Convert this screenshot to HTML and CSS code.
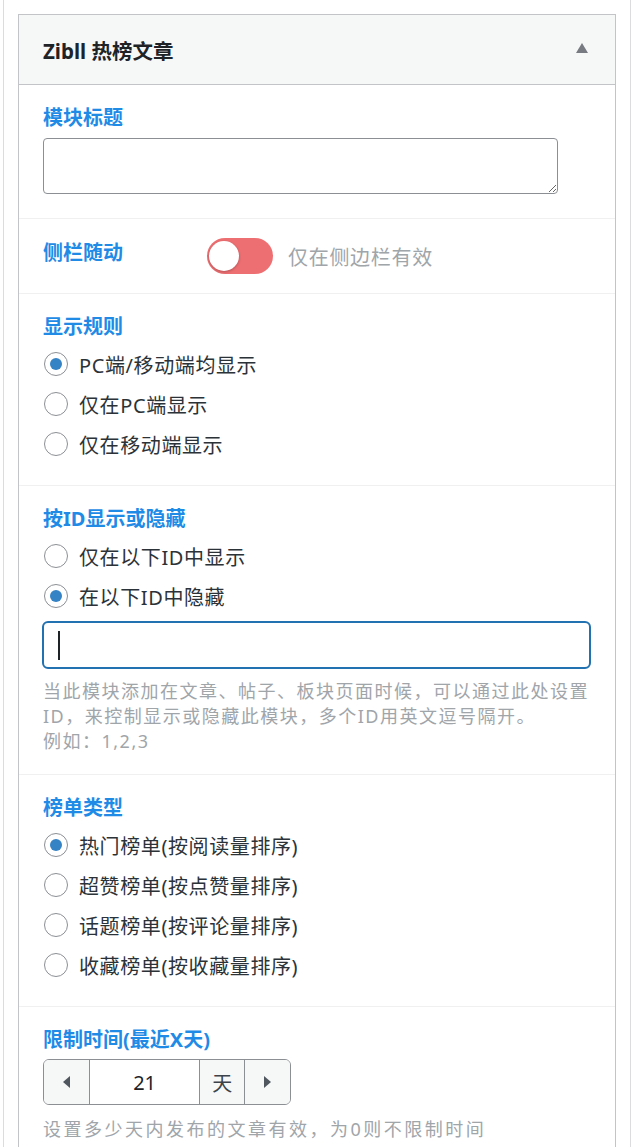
FILE: index.html
```html
<!DOCTYPE html>
<html lang="zh-CN">
<head>
  <meta charset="UTF-8">
  <meta name="viewport" content="width=device-width, initial-scale=1.0">
  <title>Zibll 热榜文章</title>
  <link rel="stylesheet" href="styles.css">
</head>
<body>
  <div class="wrap">
    <div class="widget">
      <div class="widget-top">
        <h3 class="widget-title">Zibll 热榜文章</h3>
        <span class="arrow"></span>
      </div>

      <div class="field">
        <div class="label">模块标题</div>
        <textarea class="textarea"></textarea>
      </div>

      <div class="field field-row">
        <div class="label label-inline">侧栏随动</div>
        <span class="switch"><span class="knob"></span></span>
        <span class="switch-text">仅在侧边栏有效</span>
      </div>

      <div class="field">
        <div class="label">显示规则</div>
        <ul class="radios">
          <li><span class="radio checked"></span>PC端/移动端均显示</li>
          <li><span class="radio"></span>仅在PC端显示</li>
          <li><span class="radio"></span>仅在移动端显示</li>
        </ul>
      </div>

      <div class="field">
        <div class="label">按ID显示或隐藏</div>
        <ul class="radios">
          <li><span class="radio"></span>仅在以下ID中显示</li>
          <li><span class="radio checked"></span>在以下ID中隐藏</li>
        </ul>
        <div class="text-input"><span class="caret"></span></div>
        <p class="help">当此模块添加在文章、帖子、板块页面时候，可以通过此处设置ID，来控制显示或隐藏此模块，多个ID用英文逗号隔开。<br>例如：1,2,3</p>
      </div>

      <div class="field">
        <div class="label">榜单类型</div>
        <ul class="radios">
          <li><span class="radio checked"></span>热门榜单(按阅读量排序)</li>
          <li><span class="radio"></span>超赞榜单(按点赞量排序)</li>
          <li><span class="radio"></span>话题榜单(按评论量排序)</li>
          <li><span class="radio"></span>收藏榜单(按收藏量排序)</li>
        </ul>
      </div>

      <div class="field">
        <div class="label">限制时间(最近X天)</div>
        <div class="spinner">
          <span class="spin-btn"><span class="tri tri-left"></span></span>
          <span class="spin-value">21</span>
          <span class="spin-unit">天</span>
          <span class="spin-btn"><span class="tri tri-right"></span></span>
        </div>
        <p class="help help-last">设置多少天内发布的文章有效，为0则不限制时间</p>
      </div>
    </div>
  </div>
</body>
</html>
```

FILE: styles.css
```css
body {
    margin: 0;
    background: #ffffff;
    font-family: 'Noto Sans', 'Noto Sans CJK SC', sans-serif;
    color: #2c3338;
}
.wrap {
    margin-left: 3px;
    width: 628px;
    box-sizing: border-box;
    height: 100vh;
    overflow: hidden;
    padding: 14px 14px 0;
    border-left: 1px solid #dcdcde;
    border-right: 1px solid #dcdcde;
}
.widget {
    border: 1px solid #c3c4c7;
    border-bottom: none;
    min-height: 100%;
}
.widget-top {
    height: 69px;
    display: flex;
    align-items: center;
    justify-content: space-between;
    background: #f6f7f7;
    border-bottom: 1px solid #c3c4c7;
    padding: 0 27px 0 24px;
}
.widget-title {
    margin: 0;
    font-size: 20.5px;
    font-weight: 700;
    color: #1d2327;
}
.arrow {
    width: 0;
    height: 0;
    border-left: 6.5px solid transparent;
    border-right: 6.5px solid transparent;
    border-bottom: 10px solid #787c82;
    margin-top: -4px;
}
.field {
    padding: 21px 24px 24px;
    border-top: 1px solid #f0f0f1;
}
.widget-top + .field {
    border-top: none;
}
.label {
    font-size: 20px;
    line-height: 24px;
    font-weight: 700;
    color: #1f8be6;
}
.textarea {
    display: block;
    width: 515px;
    height: 56px;
    box-sizing: border-box;
    margin-top: 8px;
    border: 1px solid #8c8f94;
    border-radius: 4px;
    font-family: inherit;
}
.field-row {
    display: flex;
    align-items: center;
    padding-top: 19px;
    padding-bottom: 19px;
}
.label-inline {
    width: 164px;
    margin-bottom: 6px;
}
.switch {
    position: relative;
    width: 66px;
    height: 36px;
    border-radius: 18px;
    background: #ee6f72;
}
.knob {
    position: absolute;
    left: 2px;
    top: 3px;
    width: 30px;
    height: 30px;
    border-radius: 50%;
    background: #ffffff;
    box-shadow: 0 1px 3px rgba(0,0,0,0.25);
}
.switch-text {
    margin-left: 15px;
    font-size: 20px;
    letter-spacing: 0.7px;
    color: #a0a5aa;
}
.radios {
    list-style: none;
    margin: 5px 0 0;
    padding: 0;
}
.radios li {
    height: 40px;
    display: flex;
    align-items: center;
    font-size: 20px;
    letter-spacing: 0.6px;
    color: #2c3338;
}
.radio {
    position: relative;
    width: 24px;
    height: 24px;
    box-sizing: border-box;
    margin: 0 11px 0 1px;
    border: 1px solid #8c8f94;
    border-radius: 50%;
    background: #ffffff;
}
.radio.checked::after {
    content: "";
    position: absolute;
    left: 5px;
    top: 5px;
    width: 12px;
    height: 12px;
    border-radius: 50%;
    background: #3582c4;
}
.field:has(.radios) {
    padding-bottom: 21px;
}
.text-input {
    margin: 5px 0 0 -1px;
    width: 549px;
    height: 48px;
    box-sizing: border-box;
    border: 2px solid #2271b1;
    border-radius: 6px;
    display: flex;
    align-items: center;
    padding-left: 14px;
}
.caret {
    width: 2px;
    height: 29px;
    background: #1d2327;
}
.help {
    margin: 10px 0 0;
    font-size: 18px;
    letter-spacing: 1.5px;
    line-height: 25px;
    color: #a0a5aa;
    word-break: break-all;
}
.field:has(.text-input) {
    padding-bottom: 20px;
}
.spinner {
    display: flex;
    margin-top: 7px;
    width: 248px;
    height: 46px;
    box-sizing: border-box;
    border: 1px solid #8c8f94;
    border-radius: 6px;
    overflow: hidden;
}
.spin-btn {
    width: 45px;
    display: flex;
    align-items: center;
    justify-content: center;
    background: #f6f7f7;
}
.spin-value {
    width: 110px;
    display: flex;
    align-items: center;
    justify-content: center;
    font-size: 20px;
    color: #1d2327;
    border-left: 1px solid #8c8f94;
    border-right: 1px solid #8c8f94;
}
.spin-unit {
    width: 44px;
    display: flex;
    align-items: center;
    justify-content: center;
    font-size: 20px;
    color: #3c434a;
    background: #f6f7f7;
    border-right: 1px solid #8c8f94;
}
.tri {
    width: 0;
    height: 0;
    border-top: 6px solid transparent;
    border-bottom: 6px solid transparent;
}
.tri-left {
    border-right: 7px solid #50575e;
}
.tri-right {
    border-left: 7px solid #50575e;
}
.help-last {
    margin-top: 12px;
    letter-spacing: 2.5px;
}
```
